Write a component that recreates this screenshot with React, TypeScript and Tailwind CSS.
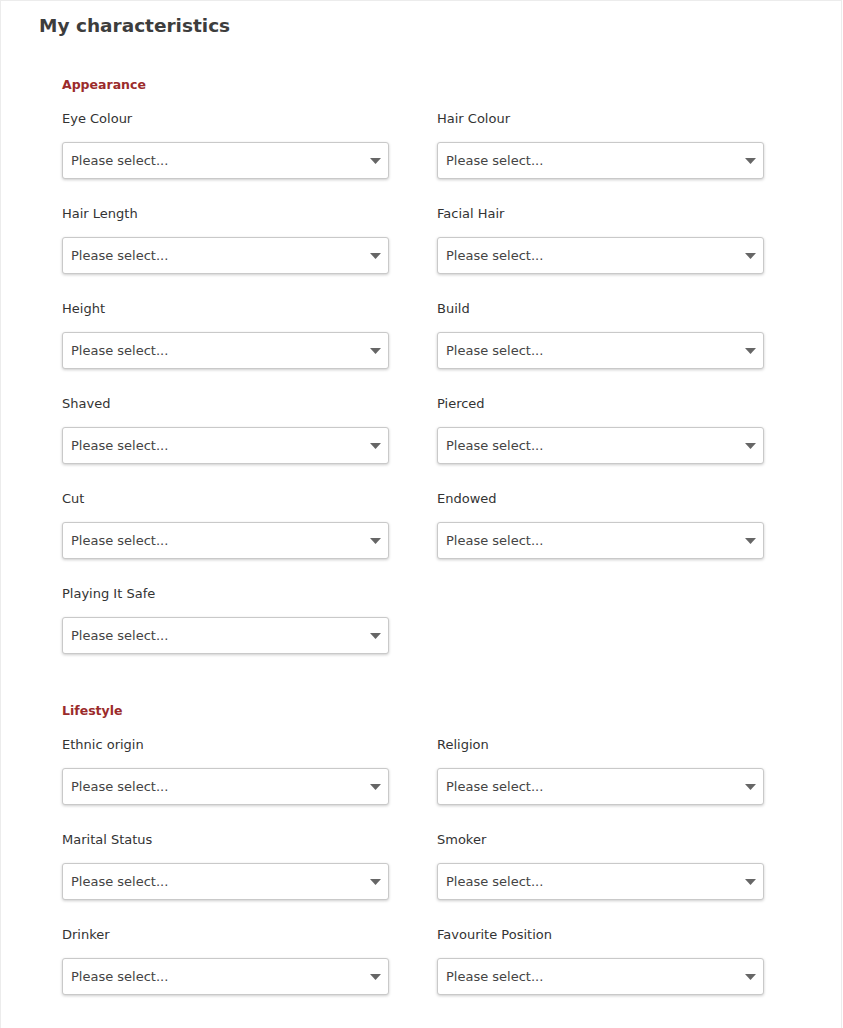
const appearance = [
  'Eye Colour',
  'Hair Colour',
  'Hair Length',
  'Facial Hair',
  'Height',
  'Build',
  'Shaved',
  'Pierced',
  'Cut',
  'Endowed',
  'Playing It Safe',
];

const lifestyle = [
  'Ethnic origin',
  'Religion',
  'Marital Status',
  'Smoker',
  'Drinker',
  'Favourite Position',
];

function SelectField({ label }: { label: string }) {
  return (
    <div className="pb-[25px]">
      <div className="text-[13px] leading-[19px] text-[#333] mb-[14px]">{label}</div>
      <div className="h-[37px] flex items-center justify-between bg-white border border-[#c9c9c9] rounded-[3px] shadow-[0_1px_3px_rgba(0,0,0,0.2)] pl-[8px] pr-[7px]">
        <span className="text-[13px] text-[#444]">Please select...</span>
        <svg width="11" height="6" viewBox="0 0 11 6" className="text-[#666]">
          <path d="M0 0h11L5.5 6z" fill="currentColor" />
        </svg>
      </div>
    </div>
  );
}

function Section({ title, fields }: { title: string; fields: string[] }) {
  return (
    <div>
      <h3 className="text-[12.5px] leading-[18px] font-bold text-[#9b2b2b] mb-[15px]">{title}</h3>
      <div className="grid grid-cols-[327px_327px] gap-x-[48px]">
        {fields.map((f) => (
          <SelectField key={f} label={f} />
        ))}
      </div>
    </div>
  );
}

export default function App() {
  return (
    <div className="w-[842px] border border-[#ececec] bg-white pt-[11px] pb-[8px] font-['DejaVu_Sans',sans-serif]">
      <h2 className="pl-[38px] text-[18.5px] leading-[28px] font-bold text-[#3d3d3d]">My characteristics</h2>
      <div className="pl-[61px] pt-[36px] flex flex-col gap-[23px]">
        <Section title="Appearance" fields={appearance} />
        <Section title="Lifestyle" fields={lifestyle} />
      </div>
    </div>
  );
}
